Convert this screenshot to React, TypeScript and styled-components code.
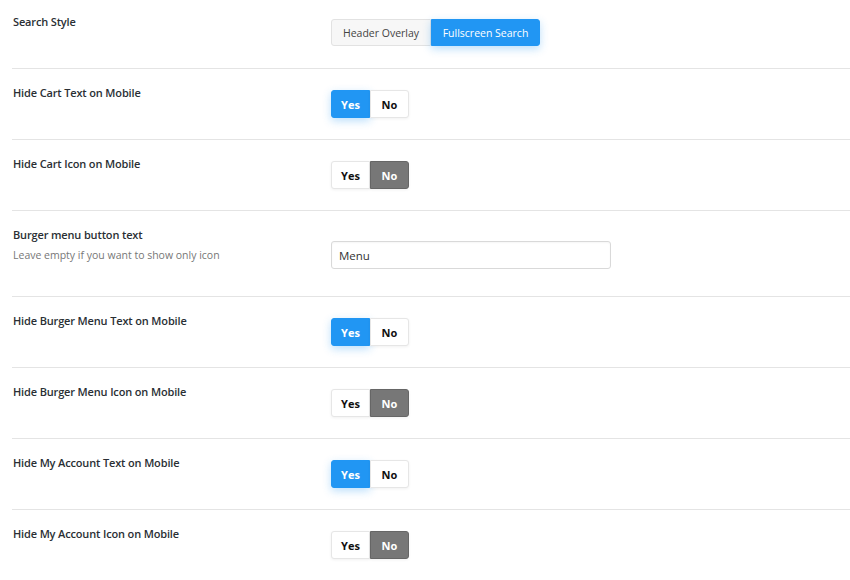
import React from "react";
import styled, { createGlobalStyle } from "styled-components";

const Global = createGlobalStyle`
  html, body { margin: 0; padding: 0; background: #fff; }
  body { font-family: "Open Sans", "Noto Sans", sans-serif; color: #23282d; }
`;

const Page = styled.div`
  padding-left: 12px;
  width: 838px;
`;

const Row = styled.div<{ $first?: boolean; $last?: boolean }>`
  display: grid;
  grid-template-columns: 318px 1fr;
  padding: ${(p) => (p.$first ? "14px 0 22px" : "16px 0 21px")};
  border-bottom: ${(p) => (p.$last ? "none" : "1px solid #e4e4e4")};
`;

const LabelCol = styled.div`
  padding-left: 1px;
`;

const Label = styled.div`
  font-size: 11px;
  font-weight: 600;
  line-height: 16px;
  color: #2a2f34;
  letter-spacing: -0.15px;
`;

const Desc = styled.div`
  font-size: 10.5px;
  line-height: 16px;
  margin-top: 4px;
  color: #777;
`;

const ControlCol = styled.div`
  padding-top: 5px;
`;

const Group = styled.div`
  display: inline-flex;
  border-radius: 3px;
  margin-left: 1px;
`;

const SegButton = styled.div<{ $active?: boolean; $w: number }>`
  width: ${(p) => p.$w}px;
  height: 27px;
  box-sizing: border-box;
  display: flex;
  align-items: center;
  justify-content: center;
  font-size: 10.5px;
  color: ${(p) => (p.$active ? "#fff" : "#444")};
  background: ${(p) => (p.$active ? "#2196f3" : "#f7f7f7")};
  border: 1px solid ${(p) => (p.$active ? "#2196f3" : "#e2e2e2")};
  box-shadow: ${(p) => (p.$active ? "0 3px 8px rgba(33,150,243,0.3)" : "none")};
  &:first-child { border-radius: 3px 0 0 3px; }
  &:last-child { border-radius: 0 3px 3px 0; }
`;

const ToggleButton = styled.div<{ $on?: "blue" | "gray" }>`
  width: 39px;
  height: 28px;
  box-sizing: border-box;
  display: flex;
  align-items: center;
  justify-content: center;
  font-size: 11px;
  font-weight: 700;
  color: ${(p) => (p.$on ? "#fff" : "#111")};
  background: ${(p) =>
    p.$on === "blue" ? "#2196f3" : p.$on === "gray" ? "#777" : "#fff"};
  border: 1px solid
    ${(p) => (p.$on === "blue" ? "#2196f3" : p.$on === "gray" ? "#666" : "#e6e6e6")};
  box-shadow: ${(p) =>
    p.$on === "blue"
      ? "0 3px 8px rgba(33,150,243,0.3)"
      : "0 1px 3px rgba(0,0,0,0.06)"};
  &:first-child { border-radius: 3px 0 0 3px; }
  &:last-child { border-radius: 0 3px 3px 0; }
`;

const Input = styled.input`
  display: block;
  margin: 9px 0 6px 1px;
  width: 280px;
  height: 28px;
  box-sizing: border-box;
  border: 1px solid #d9d9d9;
  border-radius: 3px;
  padding: 0 7px;
  font-family: "Open Sans", "Noto Sans", sans-serif;
  font-size: 11.5px;
  color: #333;
  outline: none;
  box-shadow: inset 0 1px 2px rgba(0,0,0,0.04);
`;

const YesNo = ({ yes }: { yes: boolean }) => (
  <Group>
    <ToggleButton $on={yes ? "blue" : undefined}>Yes</ToggleButton>
    <ToggleButton $on={yes ? undefined : "gray"}>No</ToggleButton>
  </Group>
);

const toggles: { label: string; yes: boolean }[] = [
  { label: "Hide Burger Menu Text on Mobile", yes: true },
  { label: "Hide Burger Menu Icon on Mobile", yes: false },
  { label: "Hide My Account Text on Mobile", yes: true },
  { label: "Hide My Account Icon on Mobile", yes: false },
];

export default function App() {
  return (
    <Page>
      <Global />
      <Row $first>
        <LabelCol>
          <Label>Search Style</Label>
        </LabelCol>
        <ControlCol>
          <Group>
            <SegButton $w={100}>Header Overlay</SegButton>
            <SegButton $w={109} $active>
              Fullscreen Search
            </SegButton>
          </Group>
        </ControlCol>
      </Row>
      <Row>
        <LabelCol>
          <Label>Hide Cart Text on Mobile</Label>
        </LabelCol>
        <ControlCol>
          <YesNo yes />
        </ControlCol>
      </Row>
      <Row>
        <LabelCol>
          <Label>Hide Cart Icon on Mobile</Label>
        </LabelCol>
        <ControlCol>
          <YesNo yes={false} />
        </ControlCol>
      </Row>
      <Row>
        <LabelCol>
          <Label>Burger menu button text</Label>
          <Desc>Leave empty if you want to show only icon</Desc>
        </LabelCol>
        <ControlCol>
          <Input defaultValue="Menu" />
        </ControlCol>
      </Row>
      {toggles.map((t, i) => (
        <Row key={t.label} $last={i === toggles.length - 1}>
          <LabelCol>
            <Label>{t.label}</Label>
          </LabelCol>
          <ControlCol>
            <YesNo yes={t.yes} />
          </ControlCol>
        </Row>
      ))}
    </Page>
  );
}
